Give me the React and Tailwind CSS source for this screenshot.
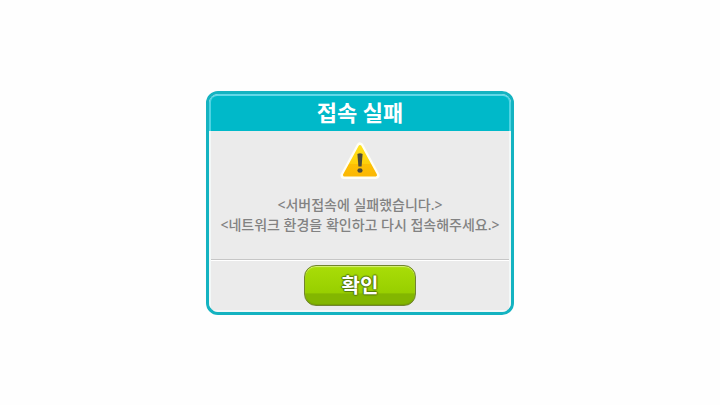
import React from "react";

function WarningIcon() {
  return (
    <svg width="42" height="40" viewBox="0 0 42 40" role="img" aria-label="경고">
      <defs>
        <linearGradient id="warningFill" x1="0" y1="0" x2="0" y2="1">
          <stop offset="0" stopColor="#ffe21c" />
          <stop offset="0.6" stopColor="#ffd00a" />
          <stop offset="0.62" stopColor="#fdc004" />
          <stop offset="1" stopColor="#fbb802" />
        </linearGradient>
      </defs>
      <path d="M21 5 L37 34.500 H5 Z" fill="#fffef4" stroke="#fffef4" strokeWidth="7" strokeLinejoin="round" />
      <path d="M21 5.500 L36.500 34 H5.500 Z" fill="url(#warningFill)" stroke="url(#warningFill)" strokeWidth="3" strokeLinejoin="round" />
      <path d="M18.400 13 Q21 11.300 23.600 13 L22.600 25.500 H19.400 Z" fill="#4b4a3c" />
      <ellipse cx="21" cy="29.500" rx="2.600" ry="2.200" fill="#4b4a3c" />
    </svg>
  );
}

export default function App() {
  return (
    <main className="flex min-h-screen items-center justify-center bg-[#fefefe] font-['Noto_Sans','Noto_Sans_CJK_KR',sans-serif]">
      <section
        role="alertdialog"
        aria-labelledby="dialog-title"
        aria-describedby="dialog-message"
        className="w-77 overflow-hidden rounded-xl border-3 border-[#14b3c1] bg-[#ebebeb]"
      >
        <header className="rounded-t-lg border-x-2 border-t-2 border-x-[#4fd3e2] border-t-[#62d8e8] bg-[#00b9c9] pb-[3px]">
          <h1 id="dialog-title" className="text-center text-[22px] leading-8 font-bold text-white">
            접속 실패
          </h1>
        </header>
        <div className="border-x-2 border-b-2 border-[#f3f8f8]">
          <div className="flex flex-col items-center gap-[14px] border-b border-[#c6c6c6] pt-2.5 pb-6">
            <WarningIcon />
            <p id="dialog-message" className="text-center text-sm leading-5 font-medium whitespace-nowrap text-[#828282]">
              &lt;서버접속에 실패했습니다.&gt;
              <br />
              &lt;네트워크 환경을 확인하고 다시 접속해주세요.&gt;
            </p>
          </div>
          <div className="flex justify-center border-t border-white py-1">
            <button
              type="button"
              className="h-[41px] w-28 rounded-xl border border-[#71842f] bg-linear-to-b from-[#a9dd08] from-0% via-[#98cf00] via-68% to-[#83b600] to-72% pt-0.5 text-xl leading-8 font-bold text-white shadow-[inset_0_1px_1px_#d9f27a,inset_0_-1px_1px_#75a000] [text-shadow:1px_0_1px_#55780a,-1px_0_1px_#55780a,0_1px_1px_#55780a,0_-1px_1px_#55780a]"
            >
              확인
            </button>
          </div>
        </div>
      </section>
    </main>
  );
}
